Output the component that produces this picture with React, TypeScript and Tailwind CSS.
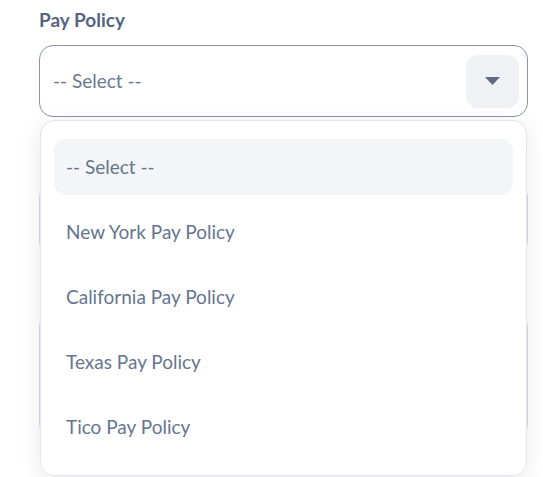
import React from "react";

const options = [
  "-- Select --",
  "New York Pay Policy",
  "California Pay Policy",
  "Texas Pay Policy",
  "Tico Pay Policy",
];

export default function App() {
  return (
    <div className="relative w-[543px] h-[477px] overflow-hidden bg-white font-['Lato','Noto_Sans',sans-serif]">
      <div className="pl-[39px] pt-[9px] w-[528px]">
        <div className="h-[36px] text-[19px] leading-[22px] font-bold text-[#56657f]">Pay Policy</div>
        <div className="h-[72px] border border-[#8b95a7] rounded-[14px] flex items-center justify-between pl-[13px] pr-[8px]">
          <span className="text-[19px] text-[#6b7890]">-- Select --</span>
          <div className="w-[53px] h-[53px] rounded-[12px] bg-[#f0f1f5] flex items-center justify-center">
            <svg width="15" height="8" viewBox="0 0 15 8">
              <path d="M0 0 L15 0 L7.5 8 Z" fill="#5f6b85" />
            </svg>
          </div>
        </div>
        <div className="mt-[66px] h-[72px] border border-[#d9dae4] rounded-[14px]" />
        <div className="mt-[58px] h-[125px] border border-[#d9dae4] rounded-[14px]" />
      </div>
      <div className="absolute left-[40px] top-[120px] w-[487px] h-[356px] rounded-[14px] bg-white border border-[#e6e7ee] shadow-[0_4px_22px_rgba(0,0,0,0.09)] pt-[18px] px-[13px] flex flex-col gap-[9px]">
        {options.map((o, i) => (
          <div
            key={o}
            className={
              "h-[56px] shrink-0 flex items-center pl-[12px] rounded-[12px] text-[19px] text-[#66758f] " +
              (i === 0 ? "bg-[#f4f5f7]" : "")
            }
          >
            {o}
          </div>
        ))}
      </div>
    </div>
  );
}
